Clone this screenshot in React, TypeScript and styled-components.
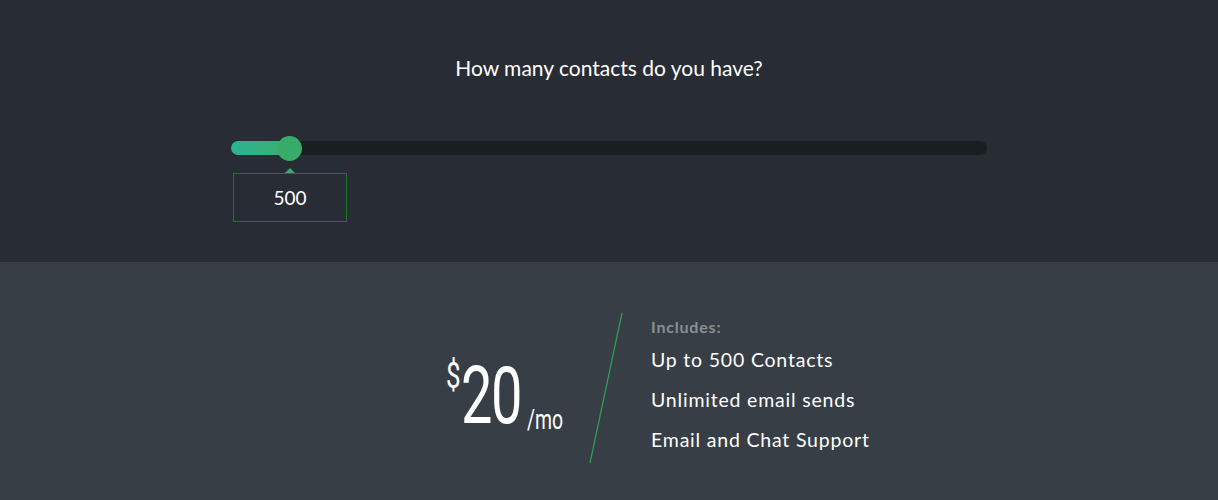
import React, { FC } from "react";
import styled, { createGlobalStyle } from "styled-components";

const GlobalStyle = createGlobalStyle`
  html, body {
    margin: 0;
    padding: 0;
    background: #373e46;
    font-family: 'Lato', 'Open Sans', sans-serif;
  }
`;

const Page = styled.div`
  width: 100%;
  min-height: 500px;
  display: flex;
  flex-direction: column;
`;

const TopPanel = styled.section`
  height: 262px;
  background: #282c34;
  display: flex;
  flex-direction: column;
  align-items: center;
  box-sizing: border-box;
  padding-top: 55px;
`;

const Question = styled.h2`
  margin: 0;
  font-size: 21px;
  font-weight: 400;
  color: #ffffff;
  letter-spacing: 0;
`;

const SliderWrap = styled.div`
  width: 756px;
  margin-top: 61px;
  position: relative;
`;

const Track = styled.div`
  height: 14px;
  border-radius: 7px;
  background: #1b1e21;
  position: relative;
`;

const Fill = styled.div`
  position: absolute;
  left: 0;
  top: 0;
  bottom: 0;
  border-radius: 7px;
  background: linear-gradient(90deg, #2bb394 0%, #3aae6c 100%);
`;

const Thumb = styled.div`
  position: absolute;
  top: 50%;
  width: 25px;
  height: 25px;
  margin-left: -12.5px;
  margin-top: -12.5px;
  border-radius: 50%;
  background: #38ad6a;
`;

const ValueBox = styled.div`
  position: absolute;
  top: 32px;
  width: 112px;
  height: 47px;
  margin-left: -57px;
  border: 1px solid #1d7a22;
  display: flex;
  align-items: center;
  justify-content: center;
  color: #ffffff;
  font-size: 19px;

  &::before {
    content: "";
    position: absolute;
    top: -6px;
    left: 50%;
    margin-left: -5px;
    border-left: 5px solid transparent;
    border-right: 5px solid transparent;
    border-bottom: 5px solid #38ad6a;
  }
`;

const BottomPanel = styled.section`
  flex: 1;
  background: #373e46;
  display: grid;
  grid-template-columns: 1fr 36px 1fr;
  align-items: start;
  padding-top: 50px;
  padding-right: 6px;
`;

const PriceCol = styled.div`
  display: flex;
  justify-content: flex-end;
  padding-right: 26px;
`;

const PriceBlock = styled.div`
  display: flex;
  align-items: flex-start;
  height: 80px;
  margin-top: 44px;
  color: #ffffff;
  font-family: 'Roboto', 'Liberation Sans', sans-serif;
`;

const Squeeze = styled.span<{ $w: number; $size: number; $scale: number }>`
  display: inline-block;
  width: ${(p) => p.$w}px;
  font-size: ${(p) => p.$size}px;
  line-height: 1;
  white-space: nowrap;
  transform: scaleX(${(p) => p.$scale});
  transform-origin: left;
`;

const Currency = styled(Squeeze)`
  margin-top: 2px;
`;

const Amount = styled(Squeeze)`
  letter-spacing: -2px;
`;

const Per = styled(Squeeze)`
  align-self: flex-end;
  margin-bottom: 2px;
`;

const Slash = styled.svg`
  width: 36px;
  height: 152px;
`;

const Features = styled.div`
  display: flex;
  flex-direction: column;
  padding-top: 5px;
  padding-left: 27px;
`;

const IncludesLabel = styled.div`
  font-size: 16px;
  font-weight: 700;
  color: #8a8f94;
  letter-spacing: 0.8px;
  margin-bottom: 4px;
`;

const Feature = styled.div`
  font-size: 19.5px;
  color: #ffffff;
  letter-spacing: 0.8px;
  line-height: 40px;
`;

const FEATURES = ["Up to 500 Contacts", "Unlimited email sends", "Email and Chat Support"];

const App: FC = () => {
  const value = 500;
  const pct = 7.8;

  return (
    <>
      <GlobalStyle />
      <Page>
        <TopPanel>
          <Question>How many contacts do you have?</Question>
          <SliderWrap>
            <Track>
              <Fill style={{ width: `${pct}%` }} />
              <Thumb style={{ left: `${pct}%` }} />
            </Track>
            <ValueBox style={{ left: `${pct}%` }}>{value}</ValueBox>
          </SliderWrap>
        </TopPanel>
        <BottomPanel>
          <PriceCol>
            <PriceBlock>
              <Currency $w={15} $size={36} $scale={0.72}>$</Currency>
              <Amount $w={66} $size={80} $scale={0.7}>20</Amount>
              <Per $w={35} $size={27} $scale={0.72}>/mo</Per>
            </PriceBlock>
          </PriceCol>
          <Slash viewBox="0 0 36 152">
            <line x1="34" y1="1" x2="2" y2="151" stroke="#2e9a55" strokeWidth="1.3" />
          </Slash>
          <Features>
            <IncludesLabel>Includes:</IncludesLabel>
            {FEATURES.map((f) => (
              <Feature key={f}>{f}</Feature>
            ))}
          </Features>
        </BottomPanel>
      </Page>
    </>
  );
};

export default App;
